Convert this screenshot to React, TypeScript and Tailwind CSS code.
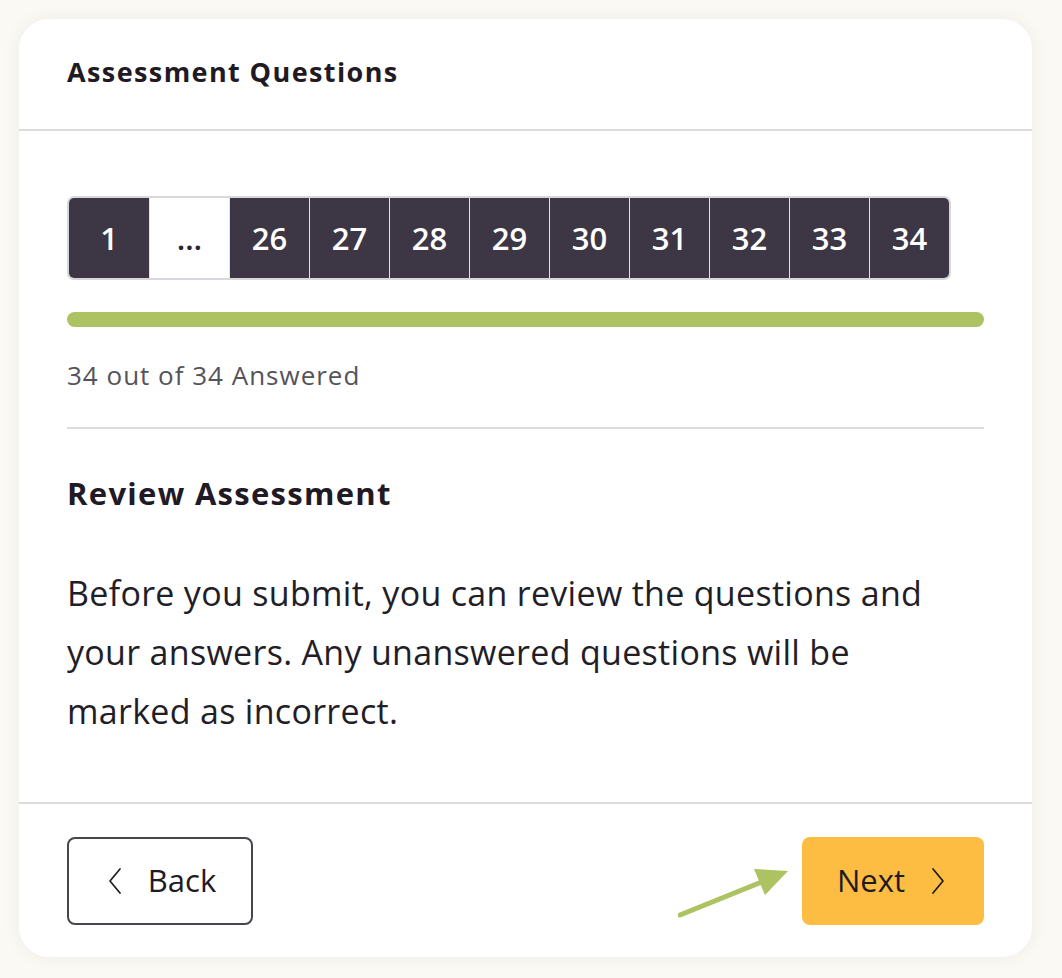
const pages = ["1", "…", "26", "27", "28", "29", "30", "31", "32", "33", "34"];

function Chevron({ dir }: { dir: "left" | "right" }) {
  return (
    <svg width="14" height="28" viewBox="0 0 14 28" fill="none" stroke="currentColor" strokeWidth="1.7" strokeLinecap="round" strokeLinejoin="round">
      {dir === "left" ? <polyline points="12,2 2,14 12,26" /> : <polyline points="2,2 12,14 2,26" />}
    </svg>
  );
}

export default function App() {
  return (
    <div className="min-h-[978px] bg-[#fbf9f4] pl-[19px] pt-[19px] font-['Open_Sans',sans-serif] text-[#1f1a24]">
      <div className="w-[1013px] rounded-[30px] bg-white shadow-[0_0_18px_rgba(0,0,0,0.06)]">
        <div className="flex h-[112px] items-center border-b-2 border-[#dcdcdc] px-[48px]">
          <h1 className="pb-[4px] text-[27px] font-bold tracking-[1.4px]">Assessment Questions</h1>
        </div>

        <div className="px-[48px] pt-[65px]">
          <div className="flex w-fit overflow-hidden rounded-[7px] border-2 border-[#d8d8dc]">
            {pages.map((p, i) => (
              <div
                key={p}
                className={`flex h-[80px] w-[80px] items-center justify-center text-[31px] font-semibold ${
                  i > 0 ? "border-l border-[#e4e4e8]" : ""
                } ${p === "…" ? "bg-white text-[#2a2530]" : "bg-[#3d3644] text-white"}`}
              >
                {p}
              </div>
            ))}
          </div>

          <div className="mt-[32px] h-[15px] rounded-full bg-[#adc261]" />

          <p className="mt-[29px] text-[26px] tracking-[1px] text-[#55535a]">34 out of 34 Answered</p>

          <div className="mt-[32px] border-t-2 border-[#dcdcdc]" />

          <h2 className="mt-[41px] text-[31px] font-bold tracking-[1.3px]">Review Assessment</h2>

          <p className="mt-[47px] max-w-[890px] pb-[61px] text-[34px] leading-[59px] tracking-[0.3px] text-[#221d27]">
            Before you submit, you can review the questions and your answers. Any unanswered questions will be marked as
            incorrect.
          </p>
        </div>

        <div className="flex items-center justify-between border-t-2 border-[#dcdcdc] px-[48px] pb-[32px] pt-[33px]">
          <button className="flex h-[88px] w-[186px] items-center justify-center gap-[26px] rounded-[8px] border-2 border-[#48464c] pl-[4px] text-[31px]">
            <Chevron dir="left" />
            <span>Back</span>
          </button>

          <div className="flex items-center">
            <svg width="120" height="56" viewBox="0 0 120 56" className="mr-[4px] mt-[20px]">
              <line x1="2" y1="52" x2="86" y2="18" stroke="#adc261" strokeWidth="5" strokeLinecap="round" />
              <polygon points="110,8 76,6 87,32" fill="#adc261" />
            </svg>
            <button className="flex h-[88px] w-[182px] items-center justify-center gap-[26px] rounded-[8px] bg-[#fdbd43] pr-[4px] text-[31px]">
              <span>Next</span>
              <Chevron dir="right" />
            </button>
          </div>
        </div>
      </div>
    </div>
  );
}
